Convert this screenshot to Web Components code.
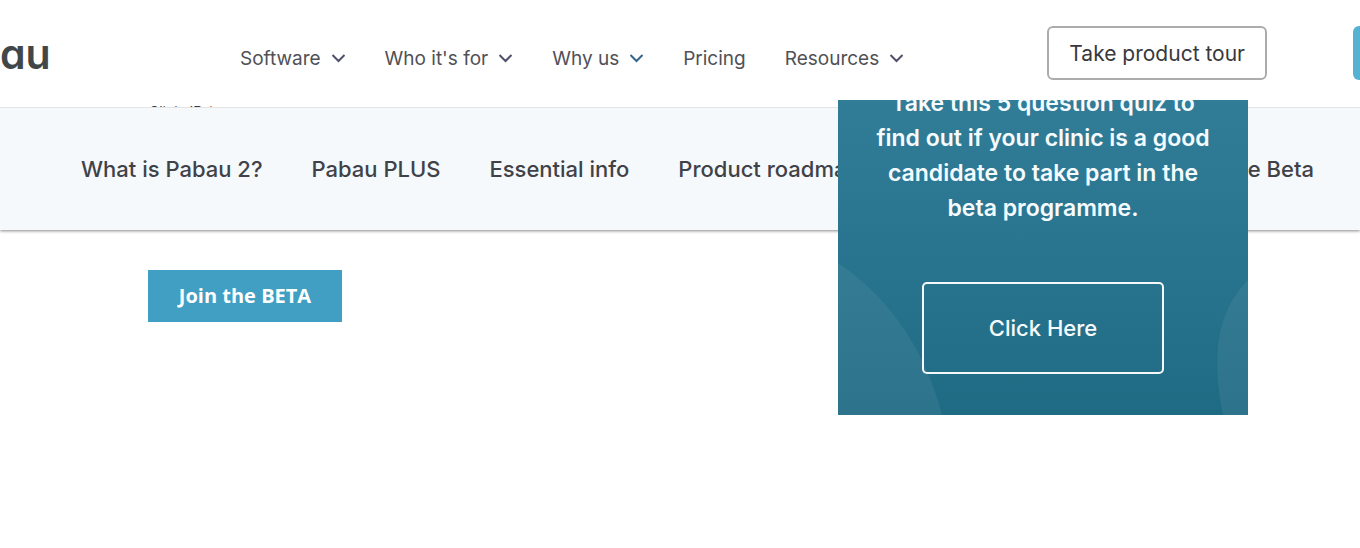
<!DOCTYPE html>
<html lang="en">
<head>
<meta charset="utf-8">
<title>Pabau 2</title>
<style>
html{height:100%}
body{margin:0;min-height:100%;background:#fff;font-family:"Inter","Open Sans",sans-serif;color:#505156;overflow-x:hidden}
</style>
</head>
<body>
<pabau-page></pabau-page>
<script>
class BaseElement extends HTMLElement{
  constructor(){
    super();
    this.attachShadow({mode:'open'}).innerHTML=this.render();
  }
}
customElements.define('menu-item',class extends BaseElement{
  render(){return `<style>
  :host{display:block;white-space:nowrap}
  a{display:flex;align-items:center;gap:10px;color:#505156;text-decoration:none;font-size:19px;line-height:24px}
  svg{display:block;flex:none}
  :host([plain]) svg{display:none}
  </style>
  <a href="#"><slot></slot><svg width="15" height="10" viewBox="0 0 15 10" fill="none" stroke="var(--chevron,#50506a)" stroke-width="2"><path d="M1.5 1L7.5 7L13.5 1"/></svg></a>`}
});
customElements.define('site-header',class extends BaseElement{
  render(){return `<style>
  :host{display:flex;position:relative;height:107px;align-items:flex-start;box-sizing:border-box;overflow:hidden;background:#fff}
  .logo{color:#414749;font:600 41px/56px "Inter",sans-serif;font-feature-settings:"cv11";text-decoration:none;margin-top:26px;flex:none;width:240px}
  nav{display:flex;gap:39px;margin-top:47px}
  .tour{margin:26px 0 0 auto;box-sizing:border-box;height:54px;padding:2px 20px 0;border:2px solid #acacac;border-radius:6px;background:#fff;color:#38383d;font:400 21px/24px "Inter",sans-serif;white-space:nowrap}
  .demo{margin:26px 0 0 86px;box-sizing:border-box;width:7px;height:54px;padding:0;border:0;border-radius:6px 0 0 6px;background:#55b2d3}
  </style>
  <a class="logo" href="#">au</a>
  <nav>
    <menu-item>Software</menu-item>
    <menu-item>Who it's for</menu-item>
    <menu-item style="--chevron:#35658a">Why us</menu-item>
    <menu-item plain>Pricing</menu-item>
    <menu-item>Resources</menu-item>
  </nav>
  <button class="tour">Take product tour</button>
  <button class="demo" aria-label="Book a demo"></button>`}
});
customElements.define('section-nav',class extends BaseElement{
  render(){return `<style>
  :host{display:block;position:relative;background:#f5f9fc;border-top:1px solid #e2e4e6;box-shadow:0 1px 3px #0007}
  nav{display:flex;gap:49px;height:122px;align-items:center;padding:0 46px 0 81px}
  a{color:#414248;text-decoration:none;font:500 22px/28px "Inter",sans-serif;white-space:nowrap}
  a:last-child{margin-left:auto}
  </style>
  <nav><a href="#">What is Pabau 2?</a><a href="#">Pabau PLUS</a><a href="#">Essential info</a><a href="#">Product roadmap</a><a href="#">Join the Beta</a></nav>`}
});
customElements.define('quiz-card',class extends BaseElement{
  render(){return `<style>
  :host{display:flex;flex-direction:column;align-items:center;justify-content:flex-end;box-sizing:border-box;height:315px;overflow:hidden;padding-bottom:41px;background:linear-gradient(#317d98,#206b84);color:#f5fbff}
  svg{position:absolute;inset:0;width:100%;height:100%}
  p{position:relative;margin:0 0 56px;text-align:center;font:600 23px/35px "Inter",sans-serif;white-space:nowrap}
  button{position:relative;width:242px;height:92px;flex:none;border:2px solid #f5f8fa;border-radius:5px;background:none;color:#f5fbff;font:500 22px/28px "Inter",sans-serif}
  </style>
  <svg viewBox="0 0 410 315" aria-hidden="true"><g fill="#fff" fill-opacity=".06"><path d="M0 163C48 195 86 246 104 315H0Z"/><path d="M410 180C381 210 372 250 385 315H410Z"/></g></svg>
  <p>Take this 5 question quiz to<br>find out if your clinic is a good<br>candidate to take part in the<br>beta programme.</p>
  <button>Click Here</button>`}
});
customElements.define('pabau-page',class extends BaseElement{
  render(){return `<style>
  :host{display:block;position:relative}
  site-header{z-index:1}
  quiz-card{position:absolute;z-index:2;top:100px;right:112px;width:410px}
  label{position:absolute;z-index:2;top:102px;left:149px;height:5px;overflow:hidden;font:400 14px/20px "Inter",sans-serif;color:#333a48}
  label span{color:#c02b0a}
  main{padding:40px 148px}
  .join{width:194px;height:52px;padding:0;border:0;background:#409fc2;color:#fff;font:700 20px/24px "Open Sans",sans-serif}
  </style>
  <site-header></site-header>
  <section-nav></section-nav>
  <main><button class="join">Join the BETA</button></main>
  <label>Clinic ID <span>*</span></label>
  <quiz-card></quiz-card>`}
});
</script>
</body>
</html>
